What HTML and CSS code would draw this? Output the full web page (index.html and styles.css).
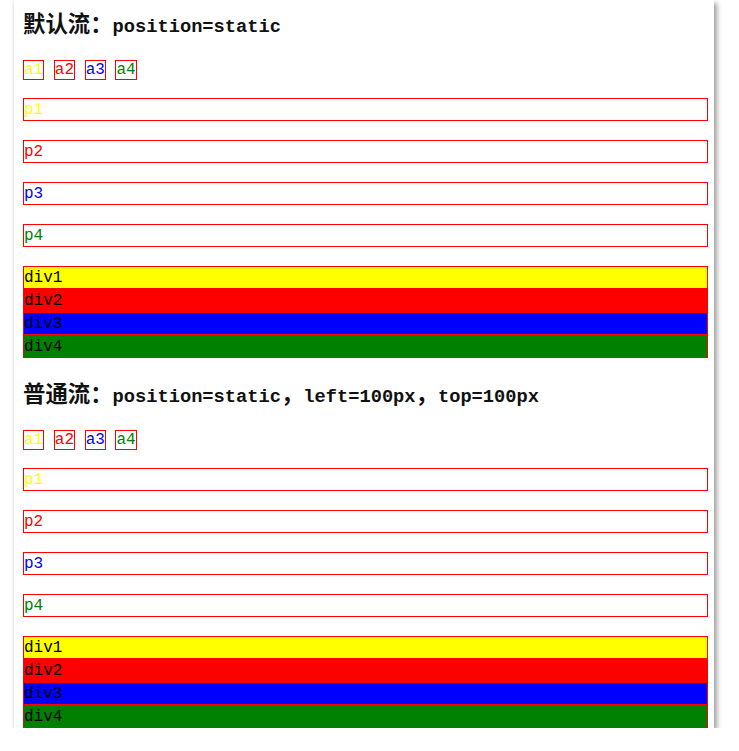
FILE: index.html
```html
<!DOCTYPE html>
<html lang="zh">
<head>
<meta charset="utf-8">
<title>position=static</title>
<link rel="stylesheet" href="styles.css">
</head>
<body>
<div class="frame">
  <section class="demo">
    <h3 class="title"><span class="cjk">默认流：</span>position=static</h3>
    <div class="links">
      <a class="tag c-yellow">a1</a> <a class="tag c-red">a2</a> <a class="tag c-blue">a3</a> <a class="tag c-green">a4</a>
    </div>
    <p class="box c-yellow">p1</p>
    <p class="box c-red">p2</p>
    <p class="box c-blue">p3</p>
    <p class="box c-green">p4</p>
    <div class="stack">
      <div class="bar bg-yellow">div1</div>
      <div class="bar bg-red">div2</div>
      <div class="bar bg-blue">div3</div>
      <div class="bar bg-green">div4</div>
    </div>
  </section>
  <section class="demo second">
    <h3 class="title"><span class="cjk">普通流：</span>position=static<span class="cjk">，</span>left=100px<span class="cjk">，</span>top=100px</h3>
    <div class="links">
      <a class="tag c-yellow">a1</a> <a class="tag c-red">a2</a> <a class="tag c-blue">a3</a> <a class="tag c-green">a4</a>
    </div>
    <p class="box c-yellow">p1</p>
    <p class="box c-red">p2</p>
    <p class="box c-blue">p3</p>
    <p class="box c-green">p4</p>
    <div class="stack">
      <div class="bar bg-yellow">div1</div>
      <div class="bar bg-red">div2</div>
      <div class="bar bg-blue">div3</div>
      <div class="bar bg-green">div4</div>
    </div>
  </section>
</div>
</body>
</html>
```
FILE: styles.css
```css
html, body {
  margin: 0;
  padding: 0;
  background: #ffffff;
}

.frame {
  box-sizing: border-box;
  margin-left: 14px;
  width: 700px;
  height: 728px;
  overflow: hidden;
  background: #ffffff;
  padding: 9px 6px 0 9px;
  box-shadow: 3px 3px 5px rgba(0, 0, 0, 0.38), -1px 0 2px rgba(0, 0, 0, 0.07);
  font-family: "Liberation Mono", "Noto Sans CJK SC", monospace;
  font-size: 16px;
  color: #000;
}

.second {
  margin-top: 21px;
}

.title {
  margin: 0;
  height: 26px;
  line-height: 26px;
  font-size: 18.72px;
  font-weight: 700;
  color: #111;
  white-space: nowrap;
}

.cjk {
  font-family: "Noto Sans CJK SC", sans-serif;
  font-size: 22.4px;
  line-height: 26px;
}

.links {
  margin: 24px 0 17px;
  height: 22px;
  line-height: 22px;
  font-size: 16px;
}

.tag {
  border: 1px solid #ff0000;
  line-height: 18px;
}

.box {
  margin: 0 0 19px;
  border: 1px solid #ff0000;
  line-height: 22px;
  height: 21px;
}

.stack {
  margin: 0;
}

.bar {
  border: 1px solid #ff0000;
  line-height: 22px;
  height: 21px;
  color: #000;
}

.c-yellow { color: #ffff00; }
.c-red { color: #ff0000; }
.c-blue { color: #0000ff; }
.c-green { color: #008000; }

.bg-yellow { background: #ffff00; }
.bg-red { background: #ff0000; }
.bg-blue { background: #0000ff; }
.bg-green { background: #008000; }
```
